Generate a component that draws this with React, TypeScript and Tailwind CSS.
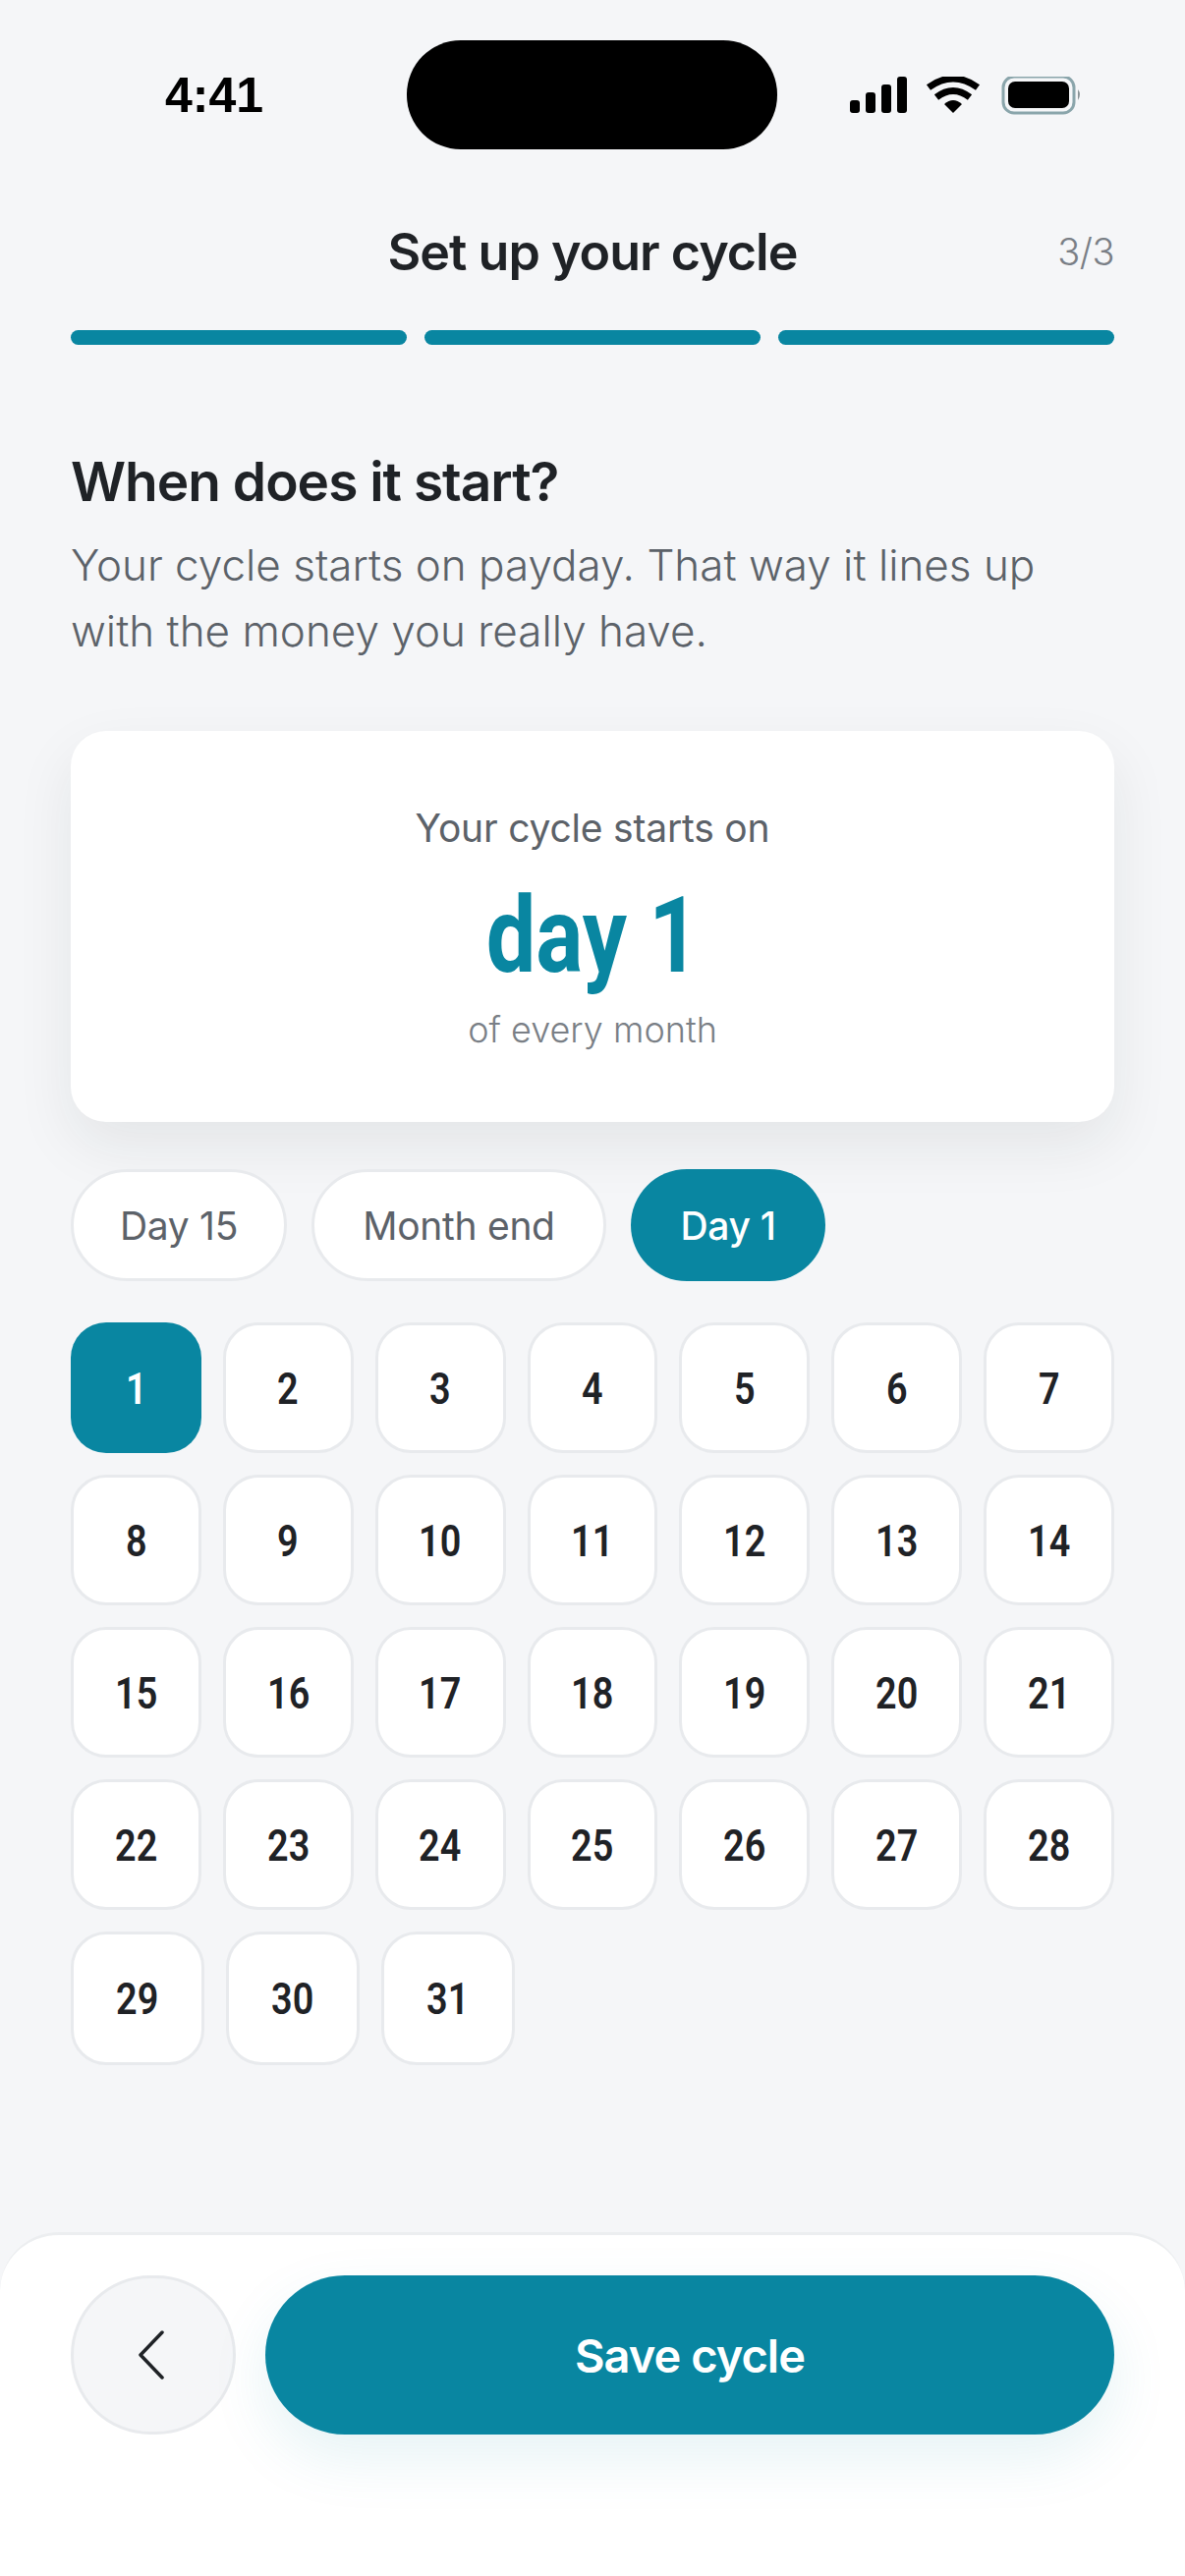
const sans = "font-['Inter','Liberation_Sans',sans-serif]"
const numeric = "font-['Roboto',sans-serif]"

const presets = [
    { label: "Day 15", width: "w-[220px]", active: false },
    { label: "Month end", width: "w-[300px]", active: false },
    { label: "Day 1", width: "w-[198px]", active: true },
]

const weeks = [
    [1, 2, 3, 4, 5, 6, 7],
    [8, 9, 10, 11, 12, 13, 14],
    [15, 16, 17, 18, 19, 20, 21],
    [22, 23, 24, 25, 26, 27, 28],
]

const StatusBar = () => (
    <div className="flex items-center pt-[41px] pl-[168px] h-[152px]">
        <span className="w-[246px] font-['Liberation_Sans',sans-serif] font-bold text-[50px] leading-none text-black">4:41</span>
        <div className="w-[377px] h-[111px] rounded-[55px] bg-black"></div>
        <svg className="ml-[74px] mt-[4px]" width="236" height="42" viewBox="0 0 236 42">
            <rect x="0" y="24" width="10" height="13" rx="3" fill="#000" />
            <rect x="16" y="16" width="10" height="21" rx="3" fill="#000" />
            <rect x="32" y="8" width="10" height="29" rx="3" fill="#000" />
            <rect x="48" y="0" width="10" height="37" rx="3" fill="#000" />
            <path d="M80 11 Q105 -7 130 11" fill="none" stroke="#000" strokeWidth="7" />
            <path d="M88 21 Q105 8 122 21" fill="none" stroke="#000" strokeWidth="7" />
            <path d="M96 28 Q105 20 114 28 L105 37 Z" fill="#000" />
            <rect x="156" y="0" width="72" height="37" rx="11" fill="none" stroke="#8aa5ab" strokeWidth="3" />
            <rect x="161" y="5" width="62" height="27" rx="7" fill="#000" />
            <path d="M232 13 Q236 18 232 24 Z" fill="#8a9396" />
        </svg>
    </div>
)

const App = () => {
    return (
        <div className={`flex flex-col w-[1206px] h-[2622px] bg-[#f5f6f8] overflow-hidden ${sans}`}>
            <StatusBar />

            <div className="px-[72px] pt-[71px]">
                <div className="relative text-center">
                    <h1 className="text-[52px] leading-[68px] font-semibold tracking-[-1px] text-[#1f2226]">Set up your cycle</h1>
                    <span className="absolute right-0 top-[11px] text-[38px] leading-[44px] font-light text-[#7a7f86] tracking-[-0.5px]">3/3</span>
                </div>

                <div className="flex gap-[18px] mt-[45px]">
                    <div className="flex-1 h-[15px] rounded-full bg-[#0986a1]"></div>
                    <div className="flex-1 h-[15px] rounded-full bg-[#0986a1]"></div>
                    <div className="flex-1 h-[15px] rounded-full bg-[#0986a1]"></div>
                </div>

                <h2 className="mt-[103px] text-[55px] leading-[72px] font-semibold tracking-[-1px] text-[#1f2226]">When does it start?</h2>
                <p className="mt-[16px] text-[44px] leading-[67px] font-light text-[#5c6269]">
                    Your cycle starts on payday. That way it lines up<br />with the money you really have.
                </p>

                <div className="flex flex-col items-center mt-[68px] h-[398px] rounded-[36px] bg-white shadow-[0_24px_60px_rgba(31,34,38,0.08)]">
                    <p className="mt-[74px] text-[39px] leading-[50px] tracking-[-0.2px] text-[#5c6269]">Your cycle starts on</p>
                    <p className={`mt-[25px] text-[107px] leading-[120px] font-bold text-[#0986a1] ${numeric}`}>
                        <span className="inline-block scale-x-[0.84]">day 1</span>
                    </p>
                    <p className="mt-[12px] text-[36px] leading-[46px] font-light text-[#7a7f86]">of every month</p>
                </div>

                <div className="flex gap-[25px] mt-[48px]">
                    {presets.map((preset) => (
                        <div
                            key={preset.label}
                            className={`flex items-center justify-center h-[114px] pt-[3px] rounded-full text-[39px] tracking-[-0.3px] ${preset.width} ${preset.active ? "bg-[#0986a1] text-white font-medium" : "bg-white border-[3px] border-[#e8eaed] text-[#5c6269]"}`}
                        >
                            {preset.label}
                        </div>
                    ))}
                </div>

                <div className="flex flex-col gap-[22px] mt-[42px]">
                    {weeks.map((week) => (
                        <div key={week[0]} className="grid grid-cols-7 gap-[22px]">
                            {week.map((day) => (
                                <div
                                    key={day}
                                    className={`flex items-center justify-center h-[133px] pt-[2px] rounded-[36px] text-[45px] font-semibold ${numeric} ${day === 1 ? "bg-[#0986a1] text-white" : "bg-white border-[3px] border-[#e8eaed] text-[#1f2226]"}`}
                                >
                                    <span className="inline-block scale-x-[0.84]">{day}</span>
                                </div>
                            ))}
                        </div>
                    ))}
                    <div className="flex gap-[22px]">
                        {[29, 30, 31].map((day) => (
                            <div
                                key={day}
                                className={`flex items-center justify-center w-[136px] h-[136px] pt-[2px] rounded-[36px] bg-white border-[3px] border-[#e8eaed] text-[45px] font-semibold text-[#1f2226] ${numeric}`}
                            >
                                <span className="inline-block scale-x-[0.84]">{day}</span>
                            </div>
                        ))}
                    </div>
                </div>
            </div>

            <div className="flex gap-[30px] mt-auto h-[350px] px-[72px] pt-[41px] rounded-t-[60px] bg-white border-t-[3px] border-[#eceef0]">
                <button className="flex items-center justify-center w-[168px] h-[162px] rounded-full bg-[#f5f6f8] border-[3px] border-[#e8eaed]">
                    <svg width="30" height="52" viewBox="0 0 30 52" fill="none">
                        <path d="M24 3 L2 26 L24 49" stroke="#1f2226" strokeWidth="3.5" strokeLinecap="round" strokeLinejoin="round" />
                    </svg>
                </button>
                <button className="flex-1 h-[162px] pt-[3px] rounded-full bg-[#0986a1] text-white text-[47px] font-semibold tracking-[-1px] shadow-[0_24px_60px_rgba(9,134,161,0.1)]">
                    Save cycle
                </button>
            </div>
        </div>
    )
}

export default App
